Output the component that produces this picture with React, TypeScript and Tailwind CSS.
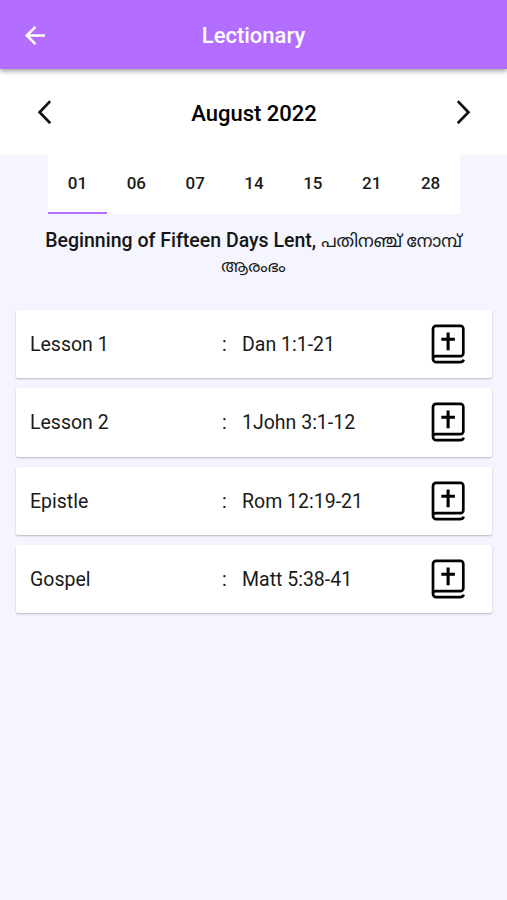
import React, { useState } from 'react';

interface Reading {
  title: string;
  verse: string;
}

const days = ['01', '06', '07', '14', '15', '21', '28'];

const readings: Reading[] = [
  { title: 'Lesson 1', verse: 'Dan 1:1-21' },
  { title: 'Lesson 2', verse: '1John 3:1-12' },
  { title: 'Epistle', verse: 'Rom 12:19-21' },
  { title: 'Gospel', verse: 'Matt 5:38-41' },
];

const BackIcon = () => (
  <svg width="20" height="20" viewBox="0 0 20 20" fill="none" stroke="white" strokeWidth="2.5">
    <path d="M20 9.5H2.2M10.4 0.9L1.8 9.5l8.6 8.6" />
  </svg>
);

const ChevronIcon: React.FC<{ flip?: boolean }> = ({ flip }) => (
  <svg
    width="14"
    height="24"
    viewBox="0 0 14 24"
    fill="none"
    stroke="#111"
    strokeWidth="2.7"
    className={flip ? '-scale-x-100' : ''}
  >
    <path d="M13.2 1.2L2.6 12.2l10.6 11" />
  </svg>
);

const BibleIcon = () => (
  <svg width="34" height="40" viewBox="0 0 34 40" fill="none" stroke="black" strokeWidth="2.7">
    <path d="M2 35V4.9a3.1 3.1 0 0 1 3.1-3.1h24.3a2.9 2.9 0 0 1 2.9 2.9v24.6a2.9 2.9 0 0 1-2.9 2.9H4.8a2.8 2.8 0 0 0-2.8 2.8a3.3 3.3 0 0 0 3.3 3.2h23.4c2 0 3.5-.8 4-2.6" />
    <path d="M17.1 8.4v17.8M10.3 15.2h13.6" strokeWidth="3.1" />
  </svg>
);

export default function App() {
  const [activeDay, setActiveDay] = useState('01');

  return (
    <div className="min-h-screen bg-[#f4f5fe] font-[Roboto,'Noto_Sans_Malayalam',sans-serif] text-[#1a1a1a]">
      {/* HEADER */}
      <header className="relative grid h-[69px] grid-cols-[1fr_auto_1fr] items-center bg-[#b36eff] px-[25px] pt-[2px] shadow-[0_2px_5px_rgba(0,0,0,0.4)]">
        <button className="justify-self-start">
          <BackIcon />
        </button>
        <h1 className="text-[22px] font-medium text-white">Lectionary</h1>
      </header>

      {/* MONTH */}
      <div className="flex h-[86px] items-center justify-between bg-white pr-[36px] pl-[37px]">
        <button>
          <ChevronIcon />
        </button>
        <h2 className="pt-[2px] text-[22px] font-medium text-black">August 2022</h2>
        <button>
          <ChevronIcon flip />
        </button>
      </div>

      {/* DAYS */}
      <div className="mr-[47px] ml-[48px] flex h-[59px] bg-white">
        {days.map((day) => (
          <button
            key={day}
            onClick={() => setActiveDay(day)}
            className={`flex-1 border-b-2 pt-px text-[17px] font-medium ${
              day === activeDay ? 'border-[#b36eff]' : 'border-transparent'
            }`}
          >
            {day}
          </button>
        ))}
      </div>

      {/* OCCASION */}
      <div className="mt-[13px] flex flex-col items-center text-[17.3px] leading-[27px] whitespace-nowrap">
        <div className="flex h-[26px] items-baseline gap-[5px]">
          <span className="text-[19.5px] font-medium text-[#151515]">
            Beginning of Fifteen Days Lent,
          </span>
          <span>പതിനഞ്ച് നോമ്പ്</span>
        </div>
        <span className="text-[16.4px]">ആരംഭം</span>
      </div>

      {/* READINGS */}
      <div className="mr-[15px] ml-4 mt-[30px] flex flex-col gap-[10px]">
        {readings.map((r) => (
          <div
            key={r.title}
            className="flex h-[68.25px] items-center rounded-[2px] bg-white pr-[27px] pl-[14px] text-[19.5px] shadow-[0_1px_2px_rgba(0,0,0,0.25)]"
          >
            <span className="w-[192px] pt-px">{r.title}</span>
            <span className="w-5 pt-px">:</span>
            <span className="flex-1 pt-px">{r.verse}</span>
            <BibleIcon />
          </div>
        ))}
      </div>
    </div>
  );
}
